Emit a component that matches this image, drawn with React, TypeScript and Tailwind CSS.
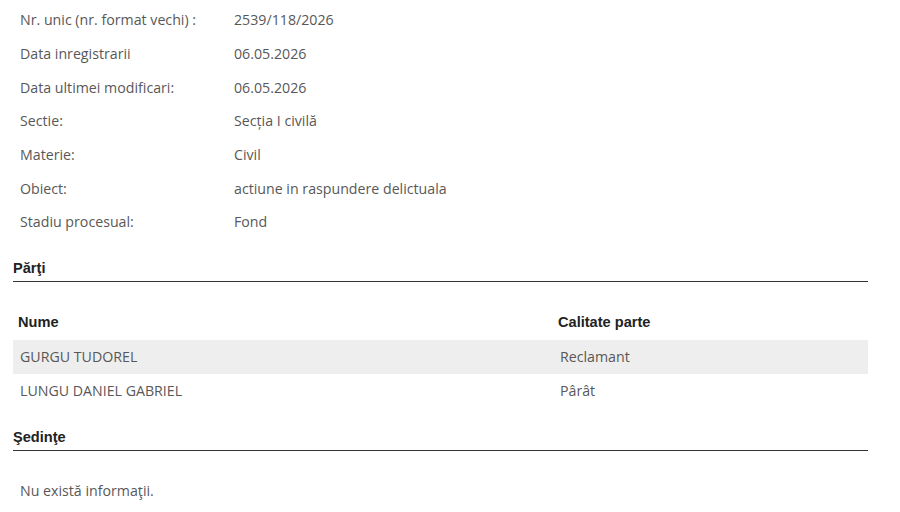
export default function App() {
  const rows: [string, string][] = [
    ["Nr. unic (nr. format vechi) :", "2539/118/2026"],
    ["Data inregistrarii", "06.05.2026"],
    ["Data ultimei modificari:", "06.05.2026"],
    ["Sectie:", "Secția I civilă"],
    ["Materie:", "Civil"],
    ["Obiect:", "actiune in raspundere delictuala"],
    ["Stadiu procesual:", "Fond"],
  ];
  const body = "font-['Open_Sans',sans-serif] text-[14.2px] text-[#585858]";
  const bold = "font-['Liberation_Sans',Arial,sans-serif] font-bold text-[14.6px] text-[#222]";
  return (
    <div className="w-[900px] h-[512px] bg-white overflow-hidden">
      <div className="pt-[3px]">
        {rows.map(([k, v]) => (
          <div key={k} className={`flex items-center h-[33.7px] ${body}`}>
            <div className="w-[234px] pl-[20px]">{k}</div>
            <div>{v}</div>
          </div>
        ))}
      </div>
      <div className="ml-[13px] w-[855px]">
        <div className={`mt-[21px] leading-[16px] pb-[5px] border-b border-[#333] ${bold}`}>Părţi</div>
        <div className="mt-[24px]">
          <div className={`flex items-center h-[34px] ${bold}`}>
            <div className="w-[545px] pl-[5px]">Nume</div>
            <div>Calitate parte</div>
          </div>
          <div className={`flex items-center h-[34px] bg-[#eeeeee] ${body}`}>
            <div className="w-[547px] pl-[7px]">GURGU TUDOREL</div>
            <div>Reclamant</div>
          </div>
          <div className={`flex items-center h-[34px] ${body}`}>
            <div className="w-[547px] pl-[7px]">LUNGU DANIEL GABRIEL</div>
            <div>Pârât</div>
          </div>
        </div>
        <div className={`mt-[21px] leading-[16px] pb-[5px] border-b border-[#333] ${bold}`}>Şedinţe</div>
        <div className={`mt-[23px] flex items-center h-[34px] pl-[7px] ${body}`}>Nu există informaţii.</div>
      </div>
    </div>
  );
}
